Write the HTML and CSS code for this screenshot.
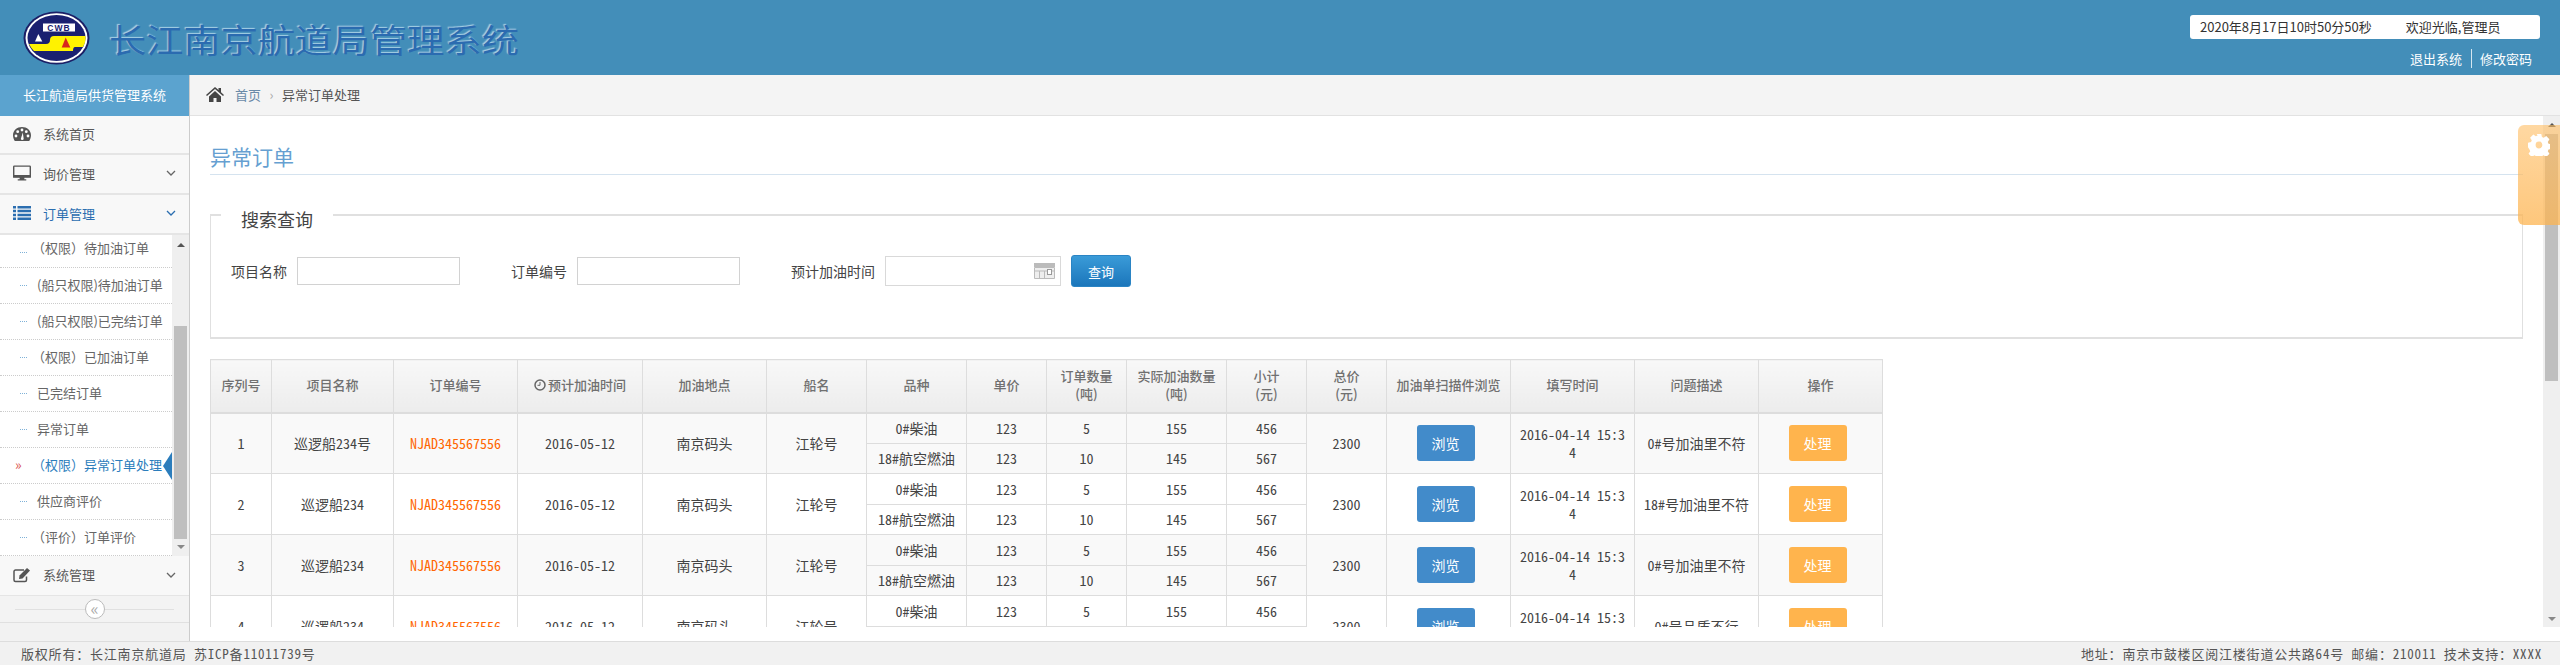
FILE: index.html
```html
<!DOCTYPE html>
<html lang="zh-CN">
<head>
    <meta charset="UTF-8">
    <title>长江南京航道局管理系统</title>
    <link rel="stylesheet" href="styles.css">
</head>
<body>
    <header class="top">
        <svg class="logo" viewBox="0 0 67 54">
            <ellipse cx="33.500" cy="27" rx="33" ry="26.500" fill="#1b1f66"/>
            <ellipse cx="33.500" cy="27" rx="31" ry="24.800" fill="#fff"/>
            <ellipse cx="33.500" cy="27" rx="29" ry="23" fill="#1a2070"/>
            <path d="M6 33H23Q27 33 27 29Q27 25 31 25H62.500Q63 31 60 36H52Q50 36 50 40H11Q8 37 6 33Z" fill="#fff200"/>
            <rect x="20" y="12.500" width="32" height="8" fill="#fff"/>
            <text x="36" y="19.700" class="logo-text" text-anchor="middle">CWB</text>
            <path d="M15.300 23L12 30.600H19.300Z" fill="#fff"/>
            <path d="M42.700 26.500L38.700 36.600H47.300Z" fill="#d8261c"/>
        </svg>
        <h1 class="sys-title"><span>长江南京航道局管理系统</span></h1>
        <div class="top-right">
            <div class="clock"><span>2020年8月17日10时50分50秒</span><span>欢迎光临,管理员</span></div>
            <div class="top-links"><a>退出系统</a><a>修改密码</a></div>
        </div>
    </header>

    <div class="layout">
        <aside class="sidebar">
            <div class="side-title">长江航道局供货管理系统</div>
            <div class="menu-item">
                <svg class="mi" viewBox="0 0 18 14"><path d="M9 0C4 0 0 3.500 0 8.300c0 2.100.7 4 1.800 5.700h14.400c1.100-1.700 1.800-3.600 1.800-5.700C18 3.500 14 0 9 0z" fill="#555"/><circle cx="9" cy="3" r="1.400" fill="#fff"/><circle cx="4.700" cy="4.700" r="1.400" fill="#fff"/><circle cx="13.300" cy="4.700" r="1.400" fill="#fff"/><circle cx="3" cy="9" r="1.400" fill="#fff"/><circle cx="15" cy="9" r="1.400" fill="#fff"/><path d="M7.800 12l2-6.500 .9 6.500a1.500 1.500 0 0 1-2.900 0z" fill="#fff"/></svg>
                <span>系统首页</span>
            </div>
            <div class="menu-item">
                <svg class="mi" viewBox="0 0 19 16"><path d="M1.500 0h16A1.500 1.500 0 0 1 19 1.500V11a1.500 1.500 0 0 1-1.500 1.500h-16A1.500 1.500 0 0 1 0 11V1.500A1.500 1.500 0 0 1 1.500 0zM1.500 1.500V10.500h16V1.500z" fill="#555" fill-rule="evenodd"/><path d="M0 10h19v3H0zM7 13h5v1.500h2V16H5v-1.500h2z" fill="#555"/></svg>
                <span>询价管理</span>
                <svg class="chev" viewBox="0 0 10 6"><path d="M1 1l4 4 4-4" fill="none" stroke="#666" stroke-width="1.300"/></svg>
            </div>
            <div class="menu-item is-open">
                <svg class="mi" viewBox="0 0 18 14"><path d="M0 0h3v2.500H0zM4.500 0h13.500v2.500H4.500zM0 3.800h3v2.500H0zM4.500 3.800h13.500v2.500H4.500zM0 7.700h3v2.500H0zM4.500 7.700h13.500v2.500H4.500zM0 11.500h3v2.500H0zM4.500 11.500h13.500v2.500H4.500z" fill="#2b6eb0"/></svg>
                <span>订单管理</span>
                <svg class="chev" viewBox="0 0 10 6"><path d="M1 1l4 4 4-4" fill="none" stroke="#2b6eb0" stroke-width="1.300"/></svg>
            </div>
            <div class="submenu">
                <ul class="sub-list">
                    <li class="sub-item tree"><span class="wide">（权限）待加油订单</span></li>
                    <li class="sub-item tree">(船只权限)待加油订单</li>
                    <li class="sub-item tree">(船只权限)已完结订单</li>
                    <li class="sub-item tree"><span class="wide">（权限）已加油订单</span></li>
                    <li class="sub-item tree">已完结订单</li>
                    <li class="sub-item tree">异常订单</li>
                    <li class="sub-item active"><span class="wide">（权限）异常订单处理</span></li>
                    <li class="sub-item tick">供应商评价</li>
                    <li class="sub-item tick"><span class="wide">（评价）订单评价</span></li>
                </ul>
                <div class="scrollbar side-scroll">
                    <i class="arrow-up"></i>
                    <b class="thumb"></b>
                    <i class="arrow-down"></i>
                </div>
            </div>
            <div class="menu-item sys-item">
                <svg class="mi" viewBox="0 0 18 16"><path d="M13.500 9.500V13a1.500 1.500 0 0 1-1.500 1.500H2.500A1.500 1.500 0 0 1 1 13V4.500A1.500 1.500 0 0 1 2.500 3H11" fill="none" stroke="#555" stroke-width="1.500"/><path d="M6.500 8.500L14 1 17 3.500 9.500 11.500 6 12z" fill="#555"/></svg>
                <span>系统管理</span>
                <svg class="chev" viewBox="0 0 10 6"><path d="M1 1l4 4 4-4" fill="none" stroke="#666" stroke-width="1.300"/></svg>
            </div>
            <div class="collapse"><span class="collapse-btn">«</span></div>
        </aside>

        <main class="main">
            <div class="crumbs">
                <svg class="home" viewBox="0 0 18 15"><path d="M9 0l3.500 3V1h2.500v4.200L18 8l-1 1-8-7-8 7-1-1zM3 9.500L9 4l6 5.500V15h-4.500v-4h-3v4H3z" fill="#444"/></svg>
                <a>首页</a><span class="sep">›</span><span>异常订单处理</span>
            </div>
            <div class="viewport">
                <div class="content">
                    <h2 class="page-title">异常订单</h2>
                    <fieldset class="search">
                        <legend>搜索查询</legend>
                        <div class="search-row">
                            <label>项目名称</label><input class="field" type="text">
                            <label>订单编号</label><input class="field" type="text">
                            <label>预计加油时间</label>
                            <div class="date-field">
                                <svg viewBox="0 0 21 16"><path d="M0 0h21v4H0z" fill="#bbb"/><path d="M.5 4.500h20v11H.5zM.5 8h20M5.500 8v7M10.500 8v7" fill="#eee" stroke="#bbb"/><rect x="13.500" y="6.500" width="4" height="5" fill="#fff" stroke="#999"/></svg>
                            </div>
                            <button class="btn-query">查询</button>
                        </div>
                    </fieldset>
                    <table class="grid">
                        <thead>
                            <tr>
                                <th>序列号</th><th>项目名称</th><th>订单编号</th>
                                <th><svg class="clock-ico" viewBox="0 0 12 12"><circle cx="6" cy="6" r="5" fill="none" stroke="#666" stroke-width="1.500"/><path d="M6 3v3.300H3.500" fill="none" stroke="#666"/></svg>预计加油时间</th>
                                <th>加油地点</th><th>船名</th><th>品种</th><th>单价</th>
                                <th>订单数量<br>(吨)</th><th>实际加油数量<br>(吨)</th><th>小计<br>(元)</th><th>总价<br>(元)</th>
                                <th>加油单扫描件浏览</th><th>填写时间</th><th>问题描述</th><th>操作</th>
                            </tr>
                        </thead>
                        <tbody>
                            <tr class="odd">
                                <td rowspan="2">1</td><td rowspan="2">巡逻船234号</td><td rowspan="2" class="order-no">NJAD345567556</td>
                                <td rowspan="2">2016-05-12</td><td rowspan="2">南京码头</td><td rowspan="2">江轮号</td>
                                <td>0#柴油</td><td>123</td><td>5</td><td>155</td><td>456</td>
                                <td rowspan="2">2300</td><td rowspan="2"><a class="btn btn-blue">浏览</a></td>
                                <td rowspan="2">2016-04-14 15:34</td><td rowspan="2">0#号加油里不符</td><td rowspan="2"><a class="btn btn-orange">处理</a></td>
                            </tr>
                            <tr class="odd"><td>18#航空燃油</td><td>123</td><td>10</td><td>145</td><td>567</td></tr>
                            <tr>
                                <td rowspan="2">2</td><td rowspan="2">巡逻船234</td><td rowspan="2" class="order-no">NJAD345567556</td>
                                <td rowspan="2">2016-05-12</td><td rowspan="2">南京码头</td><td rowspan="2">江轮号</td>
                                <td>0#柴油</td><td>123</td><td>5</td><td>155</td><td>456</td>
                                <td rowspan="2">2300</td><td rowspan="2"><a class="btn btn-blue">浏览</a></td>
                                <td rowspan="2">2016-04-14 15:34</td><td rowspan="2">18#号加油里不符</td><td rowspan="2"><a class="btn btn-orange">处理</a></td>
                            </tr>
                            <tr><td>18#航空燃油</td><td>123</td><td>10</td><td>145</td><td>567</td></tr>
                            <tr class="odd">
                                <td rowspan="2">3</td><td rowspan="2">巡逻船234</td><td rowspan="2" class="order-no">NJAD345567556</td>
                                <td rowspan="2">2016-05-12</td><td rowspan="2">南京码头</td><td rowspan="2">江轮号</td>
                                <td>0#柴油</td><td>123</td><td>5</td><td>155</td><td>456</td>
                                <td rowspan="2">2300</td><td rowspan="2"><a class="btn btn-blue">浏览</a></td>
                                <td rowspan="2">2016-04-14 15:34</td><td rowspan="2">0#号加油里不符</td><td rowspan="2"><a class="btn btn-orange">处理</a></td>
                            </tr>
                            <tr class="odd"><td>18#航空燃油</td><td>123</td><td>10</td><td>145</td><td>567</td></tr>
                            <tr>
                                <td rowspan="2">4</td><td rowspan="2">巡逻船234</td><td rowspan="2" class="order-no">NJAD345567556</td>
                                <td rowspan="2">2016-05-12</td><td rowspan="2">南京码头</td><td rowspan="2">江轮号</td>
                                <td>0#柴油</td><td>123</td><td>5</td><td>155</td><td>456</td>
                                <td rowspan="2">2300</td><td rowspan="2"><a class="btn btn-blue">浏览</a></td>
                                <td rowspan="2">2016-04-14 15:34</td><td rowspan="2">0#号品质不行</td><td rowspan="2"><a class="btn btn-orange">处理</a></td>
                            </tr>
                            <tr><td>18#航空燃油</td><td>123</td><td>10</td><td>145</td><td>567</td></tr>
                        </tbody>
                    </table>
                </div>
                <div class="scrollbar main-scroll">
                    <i class="arrow-up"></i>
                    <b class="thumb"></b>
                    <i class="arrow-down"></i>
                </div>
            </div>
        </main>
    </div>

    <div class="settings">
        <svg viewBox="0 0 24 24"><path d="M9.500 0h5l.7 3.300 1.900.8 2.800-1.800 3.500 3.500-1.800 2.800.8 1.900 3.300.7v5l-3.300.7-.8 1.900 1.800 2.800-3.500 3.500-2.800-1.800-1.900.8-.7 3.300h-5l-.7-3.300-1.900-.8-2.800 1.800-3.500-3.500 1.800-2.800-.8-1.900L0 14.500v-5l3.300-.7.8-1.900-1.800-2.800 3.500-3.500 2.800 1.800 1.900-.8zM12 8.300a3.700 3.700 0 1 0 0 7.400 3.700 3.700 0 0 0 0-7.400z" fill="#fff" fill-rule="evenodd"/></svg>
    </div>

    <footer class="foot">
        <span>版权所有：长江南京航道局 苏ICP备11011739号</span>
        <span>地址：南京市鼓楼区阅江楼街道公共路64号 邮编：210011 技术支持：XXXX</span>
    </footer>
</body>
</html>
```

FILE: styles.css
```css
*{
    box-sizing: border-box;
}
html,body{
    height: 100%;
}
body{
    margin: 0;
    display: flex;
    flex-direction: column;
    height: 100vh;
    overflow: hidden;
    font-family: "Noto Sans CJK SC", "Liberation Sans", sans-serif;
    font-size: 13px;
    color: #444;
    background-color: #fff;
}

/* top bar */
.top{
    flex: 0 0 75px;
    display: flex;
    background-color: #438eb9;
}
.logo{
    width: 67px;
    height: 54px;
    margin: 11px 0 0 23px;
}
.logo-text{
    font: bold 8.500px "Liberation Sans", sans-serif;
    letter-spacing: 1px;
    fill: #1a2070;
}
.sys-title{
    margin: 20px 0 0 19px;
    width: 411px;
    font-size: 33px;
    line-height: 38px;
    font-weight: 400;
    white-space: nowrap;
    color: #2b6bb0;
    text-shadow: -1px -1px 1px #a8d0e6;
}
.sys-title span{
    display: inline-block;
    transform-origin: left center;
    transform: scaleX(1.13);
}
.top-right{
    margin-left: auto;
    padding: 15px 20px 0 0;
    display: flex;
    flex-direction: column;
    align-items: flex-end;
}
.clock{
    width: 350px;
    height: 24px;
    padding-left: 10px;
    display: flex;
    gap: 34px;
    line-height: 24px;
    font-size: 13px;
    color: #333;
    background-color: #fff;
    border-radius: 3px;
}
.top-links{
    margin-top: 10px;
    padding-right: 8px;
    display: flex;
    color: #fff;
    line-height: 19px;
}
.top-links a + a{
    margin-left: 9px;
    padding-left: 8px;
    border-left: 1px solid #d5e6f0;
}

/* body */
.layout{
    flex: 1;
    min-height: 0;
    display: flex;
}
.sidebar{
    flex: 0 0 190px;
    border-right: 1px solid #ccc;
    background-color: #f2f2f2;
}
.side-title{
    height: 41px;
    line-height: 39px;
    text-align: center;
    color: #fff;
    background-color: #5ba3cf;
}
.menu-item{
    height: 40px;
    display: flex;
    align-items: center;
    padding: 0 13px 2px 13px;
    color: #585858;
    background-color: #f8f8f8;
    border-bottom: 2px solid #e5e5e5;
}
.menu-item:nth-child(2){
    height: 39px;
}
.menu-item.is-open{
    color: #2b6eb0;
}
.sys-item{
    border-bottom-width: 1px;
}
.mi{
    flex: 0 0 18px;
    height: 16px;
    margin-right: 12px;
}
.chev{
    width: 10px;
    height: 6px;
    margin-left: auto;
}
.submenu{
    display: flex;
    height: 321px;
    background-color: #fff;
}
.sub-list{
    position: relative;
    flex: 1;
    margin: 0;
    padding: 0;
    list-style: none;
}
.sub-list::before{
    position: absolute;
    content: '';
    left: 18px;
    top: 0;
    height: 208px;
    border-left: 1px dotted #7fb2d8;
}
.sub-item{
    position: relative;
    height: 36px;
    padding-left: 37px;
    line-height: 34px;
    white-space: nowrap;
    color: #666;
    background-color: #fff;
    border-bottom: 1px dotted #ccc;
}
.sub-item:first-child{
    height: 33px;
    line-height: 26px;
}
.wide{
    margin-left: -5px;
}
.tree::before,
.tick::before{
    position: absolute;
    content: '';
    left: 20px;
    top: 17px;
    width: 7px;
    border-top: 1px dotted #7fb2d8;
}
.active{
    color: #2b7dbc;
}
.active::before{
    position: absolute;
    content: '»';
    left: 15px;
    top: -1px;
    font-size: 14px;
    color: #d9534f;
}
.active::after{
    position: absolute;
    content: '';
    right: 0;
    top: 4px;
    border: 14px solid transparent;
    border-left: 0;
    border-right: 9px solid #2b7dbc;
}
.scrollbar{
    position: relative;
    flex: 0 0 17px;
    background-color: #efefef;
}
.thumb{
    position: absolute;
    left: 2px;
    right: 2px;
    background-color: #bfbfbf;
}
.arrow-up,
.arrow-down{
    position: absolute;
    left: 5px;
    border: 4px solid transparent;
    border-top: 0;
    border-bottom: 4px solid #555;
}
.arrow-down{
    border-bottom: 0;
    border-top: 4px solid #888;
}
.side-scroll .arrow-up{
    top: 8px;
}
.side-scroll .arrow-down{
    bottom: 7px;
}
.side-scroll .thumb{
    top: 91px;
    bottom: 17px;
}
.collapse{
    position: relative;
    height: 27px;
    background-color: #f3f3f3;
    border-bottom: 1px solid #e0e0e0;
    display: flex;
    align-items: center;
    justify-content: center;
}
.collapse::before{
    position: absolute;
    content: '';
    left: 15px;
    right: 15px;
    top: 13px;
    border-top: 1px solid #e0e0e0;
}
.collapse-btn{
    position: relative;
    width: 20px;
    height: 20px;
    line-height: 15px;
    text-align: center;
    font-size: 17px;
    color: #aaa;
    background-color: #fff;
    border: 1px solid #bbb;
    border-radius: 50%;
}

/* main */
.main{
    flex: 1;
    min-width: 0;
    display: flex;
    flex-direction: column;
}
.crumbs{
    flex: 0 0 41px;
    display: flex;
    align-items: center;
    padding: 0 0 2px 16px;
    color: #555;
    background-color: #f4f4f4;
    border-bottom: 1px solid #e2e2e2;
}
.crumbs a{
    color: #6a8aa8;
}
.home{
    width: 18px;
    height: 15px;
    margin-right: 11px;
}
.sep{
    width: 21px;
    text-align: center;
    color: #aaa;
}
.viewport{
    height: 511px;
    display: flex;
    overflow: hidden;
}
.content{
    flex: 1;
    min-width: 0;
    padding: 0 20px;
    overflow: hidden;
}
.page-title{
    margin: 26px 0 0;
    height: 33px;
    font-size: 21px;
    line-height: 28px;
    font-weight: 400;
    color: #669fd1;
    border-bottom: 1px solid #d5e3ef;
}
.search{
    margin: 24px 0 0;
    padding: 0 0 0 20px;
    height: 140px;
    border: 1px solid #e0e0e0;
    border-width: 2px 1px 2px 1px;
}
.search legend{
    margin-left: -10px;
    padding: 8px 20px 0;
    font-size: 18px;
    line-height: 24px;
    color: #444;
}
.search-row{
    display: flex;
    align-items: center;
    margin-top: 24px;
    height: 32px;
}
.search-row label{
    margin-right: 10px;
    font-size: 14px;
    white-space: nowrap;
}
.field{
    width: 163px;
    height: 28px;
    margin-right: 51px;
    border: 1px solid #d2d2d2;
    background-color: #fff;
}
.date-field{
    width: 176px;
    height: 30px;
    margin-right: 10px;
    display: flex;
    justify-content: flex-end;
    align-items: center;
    padding-right: 5px;
    border: 1px solid #d9d9d9;
}
.date-field svg{
    width: 21px;
    height: 16px;
}
.btn-query{
    width: 60px;
    height: 32px;
    padding: 0;
    font: 13px "Noto Sans CJK SC", sans-serif;
    color: #fff;
    border: 1px solid #2a84c4;
    border-radius: 3px;
    background: linear-gradient(#3a9bd8, #1b76bb);
}

/* table */
.grid{
    width: 1672px;
    margin-top: 20px;
    table-layout: fixed;
    border-collapse: collapse;
    font-family: "Noto Sans Mono CJK SC", "Noto Sans CJK SC", "Liberation Mono", monospace;
    font-size: 14px;
    color: #444;
}
.grid th,
.grid td{
    padding: 0 8px;
    text-align: center;
    border: 1px solid #ddd;
    word-break: break-all;
}
.grid th{
    height: 53px;
    padding-bottom: 2px;
    font-family: "Noto Sans CJK SC", sans-serif;
    font-size: 13px;
    font-weight: 500;
    line-height: 18px;
    color: #707070;
    border-bottom-width: 2px;
    background: linear-gradient(#f8f8f8, #ececec);
}
.grid td{
    height: 30.500px;
    line-height: 18px;
}
.grid .odd td{
    background-color: #f9f9f9;
}
.grid th:nth-child(1){ width: 61px; }
.grid th:nth-child(2){ width: 122px; }
.grid th:nth-child(3){ width: 124px; }
.grid th:nth-child(4){ width: 125px; }
.grid th:nth-child(5){ width: 124px; }
.grid th:nth-child(6){ width: 100px; }
.grid th:nth-child(7){ width: 100px; }
.grid th:nth-child(8){ width: 80px; }
.grid th:nth-child(9){ width: 80px; }
.grid th:nth-child(10){ width: 100px; }
.grid th:nth-child(11){ width: 80px; }
.grid th:nth-child(12){ width: 80px; }
.grid th:nth-child(13){ width: 124px; }
.grid th:nth-child(14){ width: 124px; }
.grid th:nth-child(15){ width: 124px; }
.grid th:nth-child(16){ width: 124px; }
.clock-ico{
    width: 12px;
    height: 12px;
    margin-right: 2px;
    vertical-align: -1px;
}
.order-no{
    color: #ff6600;
}
.btn{
    display: inline-block;
    width: 58px;
    height: 36px;
    margin-right: 6px;
    line-height: 36px;
    font-family: "Noto Sans CJK SC", sans-serif;
    font-size: 14px;
    color: #fff;
    border-radius: 3px;
    vertical-align: middle;
}
.btn-blue{
    background-color: #428bca;
}
.btn-orange{
    background-color: #ffb44d;
}

.main-scroll .arrow-up{
    top: 7px;
}
.main-scroll .arrow-down{
    bottom: 6px;
}
.main-scroll .thumb{
    top: 18px;
    height: 247px;
}

/* settings tab */
.settings{
    position: absolute;
    top: 125px;
    right: 0;
    width: 42px;
    height: 100px;
    padding: 9px 0 0 10px;
    border-radius: 6px 0 0 6px;
    background: linear-gradient(rgba(255, 190, 100, .6), rgba(253, 180, 80, .75));
}
.settings svg{
    width: 22px;
    height: 22px;
}

/* footer */
.foot{
    flex: 0 0 24px;
    display: flex;
    justify-content: space-between;
    padding: 0 18px 0 21px;
    line-height: 23px;
    font-family: "Noto Sans Mono CJK SC", "Noto Sans CJK SC", monospace;
    font-size: 13px;
    letter-spacing: .8px;
    color: #555;
    background-color: #f1f1f1;
    border-top: 1px solid #ddd;
}
```
